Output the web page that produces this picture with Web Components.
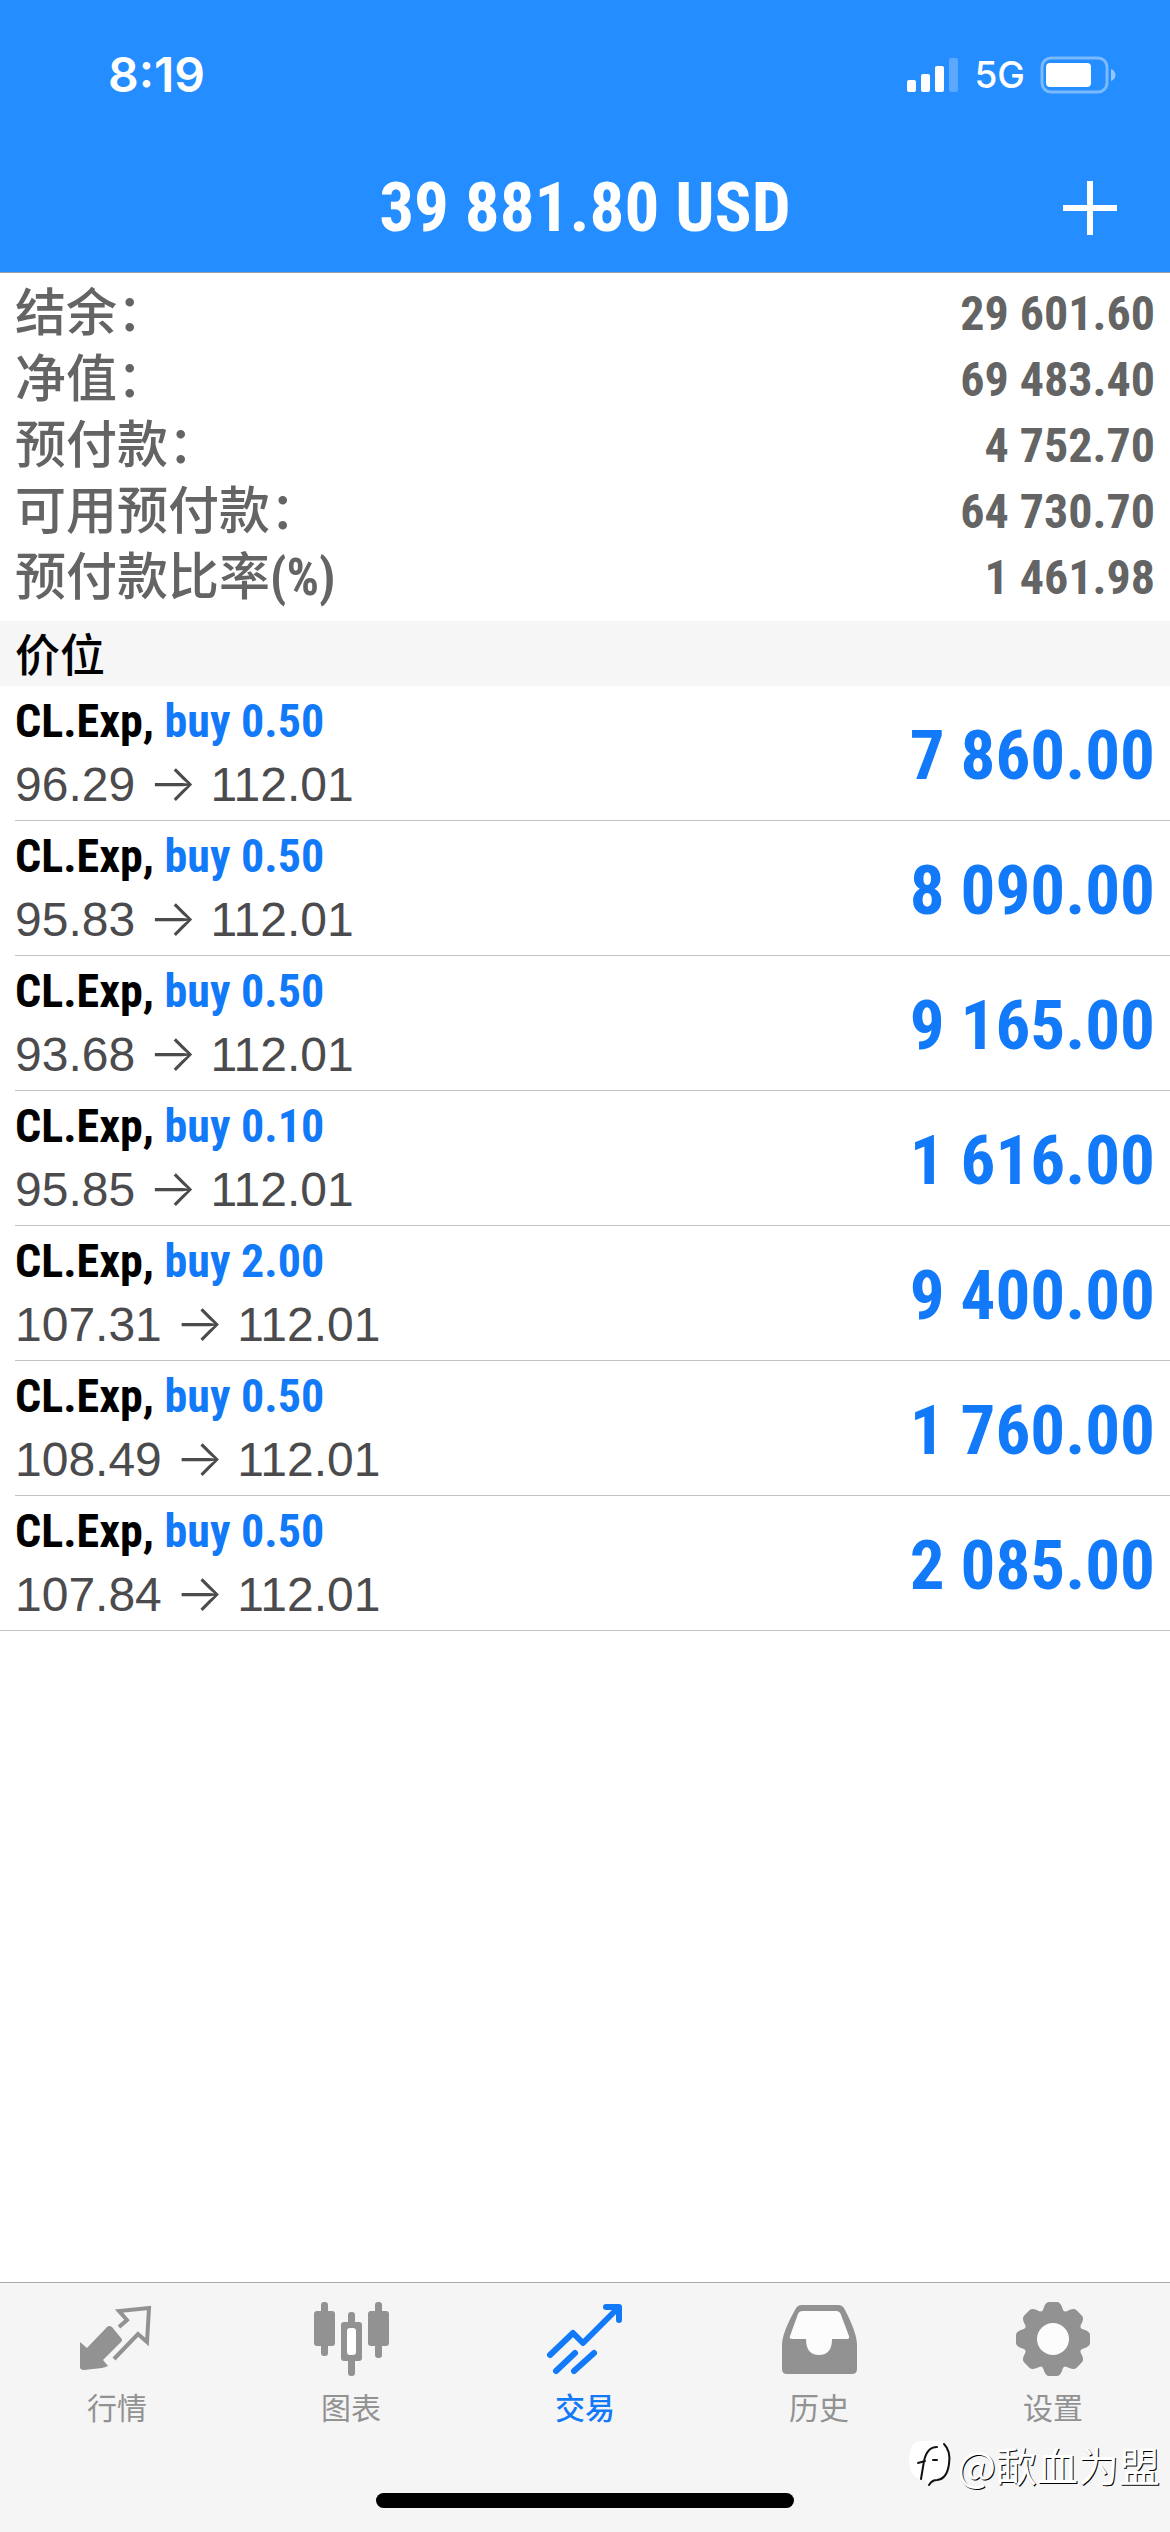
<!DOCTYPE html>
<html lang="zh-CN">
<head>
<meta charset="utf-8">
<meta name="viewport" content="width=device-width, initial-scale=1">
<title>交易</title>
<style>
html,body{margin:0;height:100%;background:#fff}
body{font-family:"Liberation Sans","Noto Sans CJK SC",sans-serif}
</style>
</head>
<body>
<trade-app></trade-app>
<script>
const COND = '"Roboto Condensed","Noto Sans CJK SC",sans-serif';
const define = (name, html, setup) => {
  const t = document.createElement('template');
  t.innerHTML = html;
  customElements.define(name, class extends HTMLElement {
    constructor() {
      super();
      this.attachShadow({mode: 'open'}).appendChild(t.content.cloneNode(true));
    }
    connectedCallback() { if (setup) setup.call(this, this.shadowRoot); }
  });
};

define('status-bar', `
<style>
:host{display:flex;justify-content:space-between;align-items:center;height:150px;box-sizing:border-box;padding:0 52px 0 108px;color:#fff;font-family:Inter,sans-serif}
time{font-size:48px;font-weight:600;line-height:54px}
.right{display:flex;align-items:center;gap:15px}
.net{font-size:37px;font-weight:500;line-height:46px}
svg{display:block}
</style>
<time>8:19</time>
<div class="right">
<svg width="52" height="34" viewBox="0 0 52 34" fill="#fff"><rect y="22" width="9" height="12" rx="2"/><rect x="14" y="16" width="9" height="18" rx="2"/><rect x="28" y="8" width="9" height="26" rx="2"/><rect x="42" width="9" height="34" rx="2" opacity=".25"/></svg>
<span class="net">5G</span>
<svg width="78" height="38" viewBox="0 0 78 38"><rect x="2" y="2" width="65" height="34" rx="9" fill="none" stroke="#fff" stroke-opacity=".4" stroke-width="3"/><rect x="6" y="7" width="45" height="24" rx="4" fill="#fff"/><path d="M71 13c6 2 6 10 0 12z" fill="#fff" fill-opacity=".5"/></svg>
</div>`);

define('nav-header', `
<style>
:host{display:grid;grid-template-columns:1fr auto 1fr;align-items:center;height:123px;padding:0 51px 7px;box-sizing:border-box;color:#fff;font-family:${COND};border-bottom:1px solid #9a9fb0}
h1{grid-column:2;margin:0;font-size:69px;font-weight:700;line-height:88px;white-space:nowrap}
button{justify-self:end;border:0;padding:0;background:none;color:inherit}
svg{display:block}
</style>
<h1><slot></slot></h1>
<button aria-label="新订单"><svg width="58" height="58" viewBox="0 0 58 58" stroke="#fff" stroke-width="6"><path d="M29 2v54M2 29h54"/></svg></button>`);

define('summary-row', `
<style>
:host{display:flex;justify-content:space-between;align-items:center;height:66px;color:#646464;line-height:66px;white-space:nowrap}
.k{font:500 51px/66px ${COND}}
.v{font:700 48px/66px ${COND}}
</style>
<span class="k"><slot name="label"></slot></span><span class="v"><slot></slot></span>`);

define('section-title', `
<style>
:host{display:block;background:#f6f6f6;padding:0 15px 2px}
h2{margin:0;font:500 45px/63px "Noto Sans CJK SC",sans-serif;color:#000}
</style><h2><slot></slot></h2>`);

define('position-row', `
<style>
:host{display:block;padding-left:15px}
:host(:last-of-type){padding-left:0}
:host(:last-of-type) .row{padding-left:15px}
.row{display:flex;justify-content:space-between;align-items:center;height:135px;box-sizing:border-box;border-bottom:1px solid #c4c4c6;padding-right:15px}
.sym{font:700 46px/62px ${COND};color:#000}
.sym span,.pl{color:#1279f8}
.px{font-size:48px;line-height:64px;color:#4b4b4e;white-space:pre}
.px i{font:300 51px/62px Inter,sans-serif}
.pl{font:700 69px/88px ${COND};padding-top:6px}
</style>
<div class="row"><div><div class="sym"></div><div class="px"></div></div><div class="pl"></div></div>`,
function (r) {
  const [vol, open, cur, pl] = ['volume', 'open', 'current', 'profit'].map(a => this.getAttribute(a));
  r.querySelector('.sym').innerHTML = `CL.Exp, <span>buy ${vol}</span>`;
  r.querySelector('.px').innerHTML = `${open} <i>→</i> ${cur}`;
  r.querySelector('.pl').textContent = pl;
});

define('tab-item', `
<style>
:host{display:block;flex:1;color:#929292}
:host([active]){color:#1279f8}
a{display:flex;flex-direction:column;align-items:center;color:inherit;text-decoration:none;font:400 30px/40px "Noto Sans CJK SC",sans-serif;gap:8px}
:host([active]) a{font-weight:500}
::slotted(svg){display:block}
</style>
<a href="#"><slot name="icon"></slot><span><slot></slot></span></a>`);

define('tab-bar', `
<style>
:host{display:block;position:relative;background:#f5f5f5;border-top:1px solid #a9a9ab}
nav{display:flex;padding-top:17px;height:210px;box-sizing:border-box}
.home{width:418px;height:15px;border-radius:8px;background:#000;margin:0 auto;margin-bottom:24px}
</style>
<nav><slot></slot></nav><div class="home"></div><slot name="overlay"></slot>`);

define('author-mark', `
<style>
:host{position:absolute;right:10px;top:153px;display:flex;align-items:center;gap:4px;color:#fff;font:400 41px/56px "Noto Sans CJK SC",sans-serif;text-shadow:1px 1px 0 #000}
svg{display:block}
</style>
<svg width="44" height="50" viewBox="0 0 44 50" fill="none" stroke-linecap="round"><path d="M10 2H30Q41 4 41 20Q41 38 28 41Q23 41 20 46L17 41Q0 40 0 22Q0 4 10 2z" fill="#fff"/><path d="M28 8Q18 8 15 22L12 40M9 24 16 22M24 21H28" stroke="#111" stroke-width="2"/><path d="M35 5Q42 12 40 25Q38 40 28 41Q23 41 20 46" stroke="#111" stroke-width="2"/></svg>
<span><slot></slot></span>`);

define('trade-app', `
<style>
:host{display:flex;flex-direction:column;min-height:100vh;background:#fff}
header{background:#248dff}
.summary{padding:8px 15px 10px}
main{flex:1}
b{font-weight:700}
</style>
<header><status-bar></status-bar><nav-header>39 881.80 USD</nav-header></header>
<main>
<div class="summary">
<summary-row><span slot="label">结余：</span>29 601.60</summary-row>
<summary-row><span slot="label">净值：</span>69 483.40</summary-row>
<summary-row><span slot="label">预付款：</span>4 752.70</summary-row>
<summary-row><span slot="label">可用预付款：</span>64 730.70</summary-row>
<summary-row><span slot="label">预付款比率<b>(%)</b></span>1 461.98</summary-row>
</div>
<section-title>价位</section-title>
<div>
<position-row volume="0.50" open="96.29" current="112.01" profit="7 860.00"></position-row>
<position-row volume="0.50" open="95.83" current="112.01" profit="8 090.00"></position-row>
<position-row volume="0.50" open="93.68" current="112.01" profit="9 165.00"></position-row>
<position-row volume="0.10" open="95.85" current="112.01" profit="1 616.00"></position-row>
<position-row volume="2.00" open="107.31" current="112.01" profit="9 400.00"></position-row>
<position-row volume="0.50" open="108.49" current="112.01" profit="1 760.00"></position-row>
<position-row volume="0.50" open="107.84" current="112.01" profit="2 085.00"></position-row>
</div>
</main>
<tab-bar>
<tab-item><svg slot="icon" width="78" height="78" viewBox="0 0 78 78"><path d="M2 25 9 31 29 10Q31 8 34 10L43 21Q45 23 43 25L25 43 30 49Q28 50 24 51L6 53Q2 53 2 50z" transform="translate(0 17)" fill="currentColor"/><path d="M41 27 49 20 41 11 71 8 69 42 60 34 36 59" fill="none" stroke="currentColor" stroke-width="4"/></svg>行情</tab-item>
<tab-item><svg slot="icon" width="78" height="78" viewBox="0 0 78 78" fill="currentColor"><rect x="9" y="2" width="7" height="54" rx="3"/><rect x="2" y="11" width="21" height="35" rx="3"/><rect x="63" y="2" width="7" height="56" rx="3"/><rect x="56" y="11" width="21" height="35" rx="3"/><rect x="36" y="12" width="7" height="64" rx="3"/><rect x="29" y="22" width="21" height="39" rx="3"/><rect x="35" y="28" width="9" height="27" rx="3" fill="#fff"/></svg>图表</tab-item>
<tab-item active><svg slot="icon" width="78" height="78" viewBox="0 0 78 78" fill="none" stroke="currentColor" stroke-width="6" stroke-linecap="round" stroke-linejoin="round"><path d="M4 55 27 33 37 43 72 8M60 7H73V20"/><path d="M10 71 29 53M28 71 48 53"/></svg>交易</tab-item>
<tab-item><svg slot="icon" width="78" height="78" viewBox="0 0 78 78"><path d="M18 10H60L70 40H53Q52 56 39 56Q26 56 25 40H8z" fill="#fcfcfc"/><path fill="currentColor" fill-rule="evenodd" d="M15 10Q17 5 22 5H58Q63 5 65 10Q77 33 77 45V69Q77 74 72 74H7Q2 74 2 69V45Q2 33 15 10zM18 14 10 36Q9 39 12 39H26Q26 55 39 55Q52 55 52 39H67Q70 39 69 36L61 15Q60 11 56 11H23Q19 11 18 14z"/></svg>历史</tab-item>
<tab-item><svg slot="icon" width="78" height="78" viewBox="0 0 78 78"><defs><path id="tooth" d="M-14-26Q-10-27-9-32Q-7-37-4-37H4Q7-37 9-32Q10-27 14-26V0H-14z"/></defs><g fill="currentColor" transform="translate(39 39)"><use href="#tooth"/><use href="#tooth" transform="rotate(45)"/><use href="#tooth" transform="rotate(90)"/><use href="#tooth" transform="rotate(135)"/><use href="#tooth" transform="rotate(180)"/><use href="#tooth" transform="rotate(225)"/><use href="#tooth" transform="rotate(270)"/><use href="#tooth" transform="rotate(315)"/><circle r="16" fill="#fcfcfc"/></g></svg>设置</tab-item>
<author-mark slot="overlay">@歃血为盟</author-mark>
</tab-bar>`);
</script>
</body>
</html>
